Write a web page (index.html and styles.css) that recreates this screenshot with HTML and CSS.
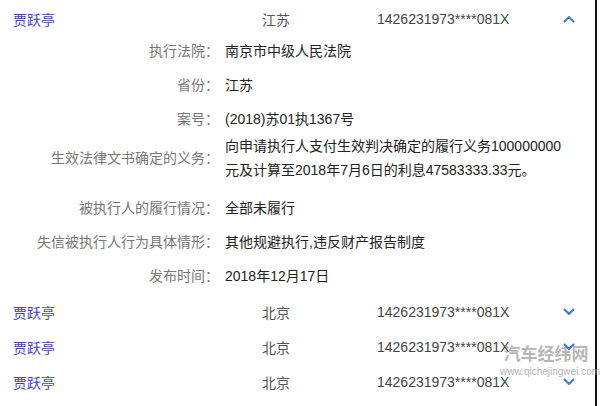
FILE: index.html
```html
<!DOCTYPE html>
<html lang="zh-CN">
<head>
<meta charset="utf-8">
<title>失信被执行人</title>
<link rel="stylesheet" href="styles.css">
</head>
<body>
<div class="page">
  <div class="panel">
    <div class="row row-first">
      <span class="name">贾跃亭</span>
      <span class="area">江苏</span>
      <span class="idno">1426231973****081X</span>
      <svg class="chev" viewBox="0 0 12 8" width="12" height="8"><path d="M1.5 6.5 L6 2 L10.5 6.5" /></svg>
    </div>
    <div class="details">
      <div class="label">执行法院：</div><div class="value">南京市中级人民法院</div>
      <div class="label">省份：</div><div class="value">江苏</div>
      <div class="label">案号：</div><div class="value">(2018)苏01执1367号</div>
      <div class="label multi">生效法律文书确定的义务：</div><div class="value multi">向申请执行人支付生效判决确定的履行义务100000000元及计算至2018年7月6日的利息47583333.33元。</div>
      <div class="label">被执行人的履行情况：</div><div class="value">全部未履行</div>
      <div class="label">失信被执行人行为具体情形：</div><div class="value">其他规避执行,违反财产报告制度</div>
      <div class="label">发布时间：</div><div class="value">2018年12月17日</div>
    </div>
    <div class="row">
      <span class="name">贾跃亭</span>
      <span class="area">北京</span>
      <span class="idno">1426231973****081X</span>
      <svg class="chev" viewBox="0 0 12 8" width="12" height="8"><path d="M1.5 1.5 L6 6 L10.5 1.5" /></svg>
    </div>
    <div class="row">
      <span class="name">贾跃亭</span>
      <span class="area">北京</span>
      <span class="idno">1426231973****081X</span>
      <svg class="chev" viewBox="0 0 12 8" width="12" height="8"><path d="M1.5 1.5 L6 6 L10.5 1.5" /></svg>
    </div>
    <div class="row">
      <span class="name">贾跃亭</span>
      <span class="area">北京</span>
      <span class="idno">1426231973****081X</span>
      <svg class="chev" viewBox="0 0 12 8" width="12" height="8"><path d="M1.5 1.5 L6 6 L10.5 1.5" /></svg>
    </div>
    <div class="watermark">
      <div class="wm-big">汽车经纬网</div>
      <div class="wm-small">www.qichejingwei.com</div>
    </div>
  </div>
</div>
</body>
</html>
```
FILE: styles.css
```css
html, body {
  margin: 0;
  padding: 0;
  background: #fff;
}
body {
  font-family: "Liberation Sans", "Noto Sans CJK SC", sans-serif;
  font-size: 14px;
  color: #222;
}
.page {
  width: 600px;
  height: 406px;
  overflow: hidden;
}
.panel {
  position: relative;
  width: 595px;
  height: 406px;
  border-right: 2px solid #111;
  box-sizing: content-box;
}
.row {
  display: flex;
  align-items: center;
  height: 35px;
  padding-left: 13px;
}
.row-first {
  height: 36px;
  padding-top: 2px;
  box-sizing: border-box;
}
.name {
  width: 249px;
  color: #4040c8;
}
.area {
  width: 115px;
  color: #555;
}
.idno {
  flex: 1;
  color: #444;
}
.chev {
  position: relative;
  z-index: 2;
  margin-right: 20px;
  fill: none;
  stroke: #3a7bd5;
  stroke-width: 2;
  stroke-linecap: round;
  stroke-linejoin: round;
}
.details {
  display: grid;
  grid-template-columns: 219px 345px;
  column-gap: 6px;
  row-gap: 10px;
  padding: 3px 0 6px;
  line-height: 24px;
  align-items: center;
}
.label {
  text-align: right;
  color: #777;
}
.value {
  color: #222;
}
.multi {
  margin-top: -7px;
  margin-bottom: 4px;
}
.watermark {
  position: absolute;
  left: 500px;
  top: 341px;
  width: 92px;
  text-align: center;
  pointer-events: none;
  z-index: 1;
}
.wm-big {
  font-family: "Noto Sans CJK SC", sans-serif;
  font-size: 17px;
  font-weight: bold;
  color: rgba(150, 150, 150, 0.7);
  line-height: 24px;
}
.wm-small {
  font-family: "Liberation Sans", sans-serif;
  font-size: 10px;
  color: rgba(150, 150, 150, 0.75);
  line-height: 14px;
  white-space: nowrap;
}
```
